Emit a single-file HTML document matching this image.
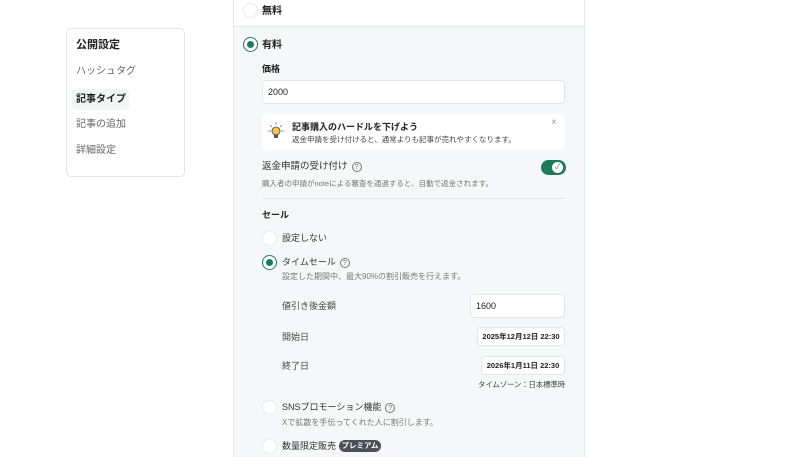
<!DOCTYPE html>
<html><head><meta charset="utf-8"><style>
*{margin:0;padding:0;box-sizing:border-box}
html,body{width:800px;height:457px;overflow:hidden}
body{background:#fff;font-family:"Liberation Sans","Noto Sans CJK JP",sans-serif;color:#222;position:relative}
.a{position:absolute;white-space:nowrap;line-height:1.8}
.side{left:66px;top:28px;width:119px;height:149px;border:1px solid #e3e5e8;border-radius:5px;background:#fff}
.panel{left:233px;top:-2px;width:352px;height:470px;border:1px solid #e6e8eb;background:#f6f7f8}
.top{left:234px;top:0;width:350px;height:27px;background:#fff;border-bottom:1px solid #e6e8eb}
.r{width:15px;height:15px;border-radius:50%;background:#fff;border:1px solid #e8eaec}
.rs{border:1.5px solid #1e7b5a}
.rs::after{content:"";position:absolute;left:2.5px;top:2.5px;width:7px;height:7px;border-radius:50%;background:#1e7b5a}
.box{background:#fff;border:1px solid #e3e5e8;border-radius:4px}
.t{font-size:10px}
.b{font-weight:bold}
.g{color:#666}
.s{font-size:8px;color:#777}
.q{display:inline-block;width:10px;height:10px;border:1px solid #777;border-radius:50%;font-size:7px;text-align:center;line-height:9px;color:#777;margin-left:4px;vertical-align:0}
</style></head><body>
<div class="a side"></div>
<div class="a t b" style="left:76px;top:36px;font-size:11px">公開設定</div>
<div class="a t g" style="left:76px;top:63px">ハッシュタグ</div>
<div class="a" style="left:72px;top:89px;width:57px;height:21px;background:#f3f4f6;border-radius:3px"></div>
<div class="a t b" style="left:76px;top:91px">記事タイプ</div>
<div class="a t g" style="left:76px;top:116px">記事の追加</div>
<div class="a t g" style="left:76px;top:142px">詳細設定</div>

<div class="a panel"></div>
<div class="a top"></div>
<div class="a r" style="left:243px;top:3px"></div>
<div class="a t b" style="left:262px;top:3px">無料</div>
<div class="a r rs" style="left:243px;top:37px"></div>
<div class="a t b" style="left:262px;top:37px">有料</div>
<div class="a t b" style="left:262px;top:61px;font-size:9px">価格</div>
<div class="a box" style="left:262px;top:80px;width:303px;height:24px"></div>
<div class="a" style="left:268px;top:84px;font-size:9px">2000</div>
<div class="a" style="left:262px;top:114px;width:303px;height:36px;background:#fff;border-radius:4px"></div>
<svg class="a" style="left:268px;top:122px" width="16" height="18" viewBox="0 0 16 18"><g stroke="#999" stroke-width="1"><line x1="8" y1="0" x2="8" y2="3"/><line x1="2" y1="3" x2="4" y2="5"/><line x1="14" y1="3" x2="12" y2="5"/><line x1="0" y1="9" x2="3" y2="9"/><line x1="13" y1="9" x2="16" y2="9"/></g><circle cx="8" cy="9" r="4" fill="#f2c94c" stroke="#444" stroke-width=".8"/><rect x="6" y="13" width="4" height="3" fill="#555"/></svg>
<div class="a b" style="left:292px;top:119px;font-size:9px">記事購入のハードルを下げよう</div>
<div class="a" style="left:292px;top:133px;font-size:7.5px;color:#444">返金申請を受け付けると、通常よりも記事が売れやすくなります。</div>
<div class="a" style="left:551px;top:114px;font-size:10px;color:#999">×</div>
<div class="a" style="left:262px;top:158px;font-size:9.5px;color:#333">返金申請の受け付け<span class="q">?</span></div>
<div class="a" style="left:541px;top:160px;width:25px;height:15px;border-radius:8px;background:#1e7b5a"></div>
<div class="a" style="left:552px;top:162px;width:11px;height:11px;border-radius:50%;background:#fff;font-size:7px;color:#1e7b5a;text-align:center;line-height:11px">✓</div>
<div class="a s" style="left:262px;top:177px;font-size:7.5px">購入者の申請がnoteによる審査を通過すると、自動で返金されます。</div>
<div class="a" style="left:262px;top:198px;width:303px;height:1px;background:#e3e5e8"></div>
<div class="a b" style="left:262px;top:207px;font-size:9px">セール</div>
<div class="a r" style="left:262px;top:231px"></div>
<div class="a" style="left:282px;top:230px;font-size:9px;color:#333">設定しない</div>
<div class="a r rs" style="left:262px;top:255px"></div>
<div class="a" style="left:282px;top:254px;font-size:9px;color:#333">タイムセール<span class="q">?</span></div>
<div class="a s" style="left:282px;top:270px">設定した期間中、最大90%の割引販売を行えます。</div>
<div class="a" style="left:282px;top:298px;font-size:9px;color:#444">値引き後金額</div>
<div class="a box" style="left:470px;top:294px;width:95px;height:24px"></div>
<div class="a" style="left:476px;top:298px;font-size:9px">1600</div>
<div class="a" style="left:282px;top:329px;font-size:9px;color:#444">開始日</div>
<div class="a box b" style="left:477px;top:327px;width:88px;height:19px;font-size:7.5px;text-align:center;line-height:17px">2025年12月12日 22:30</div>
<div class="a" style="left:282px;top:358px;font-size:9px;color:#444">終了日</div>
<div class="a box b" style="left:481px;top:356px;width:84px;height:19px;font-size:7.5px;text-align:center;line-height:17px">2026年1月11日 22:30</div>
<div class="a" style="left:445px;top:378px;width:120px;text-align:right;font-size:7.5px;color:#444;letter-spacing:-0.2px">タイムゾーン：日本標準時</div>
<div class="a r" style="left:262px;top:400px"></div>
<div class="a" style="left:282px;top:399px;font-size:9px;color:#333">SNSプロモーション機能<span class="q">?</span></div>
<div class="a s" style="left:282px;top:416px">Xで拡散を手伝ってくれた人に割引します。</div>
<div class="a r" style="left:262px;top:439px"></div>
<div class="a" style="left:282px;top:438px;font-size:9px;color:#333">数量限定販売</div>
<div class="a b" style="left:339px;top:440px;width:42px;height:12px;border-radius:6px;background:#4a5058;color:#fff;font-size:7.5px;text-align:center;line-height:12px">プレミアム</div>
</body></html>
